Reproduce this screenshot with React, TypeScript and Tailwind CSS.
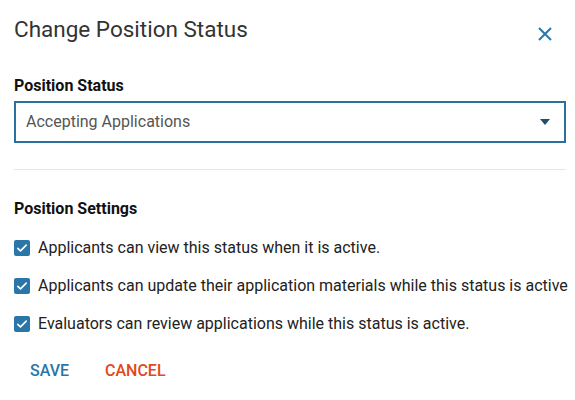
const settings = [
  "Applicants can view this status when it is active.",
  "Applicants can update their application materials while this status is active",
  "Evaluators can review applications while this status is active.",
];

function CheckBox() {
  return (
    <span className="flex h-4 w-4 shrink-0 items-center justify-center rounded-[2px] bg-[#2a76a8]">
      <svg viewBox="0 0 16 16" className="h-4 w-4" fill="none">
        <path d="M3.8 8.3l2.7 2.6 5.7-5.8" stroke="white" strokeWidth="1.6" strokeLinecap="round" strokeLinejoin="round" />
      </svg>
    </span>
  );
}

export default function App() {
  return (
    <div className="h-[400px] w-[575px] overflow-hidden bg-white font-['Roboto',sans-serif]">
      <div className="flex items-start justify-between pl-[14px] pr-[23px] pt-[14px]">
        <h1 className="text-[22.5px] leading-[30px] text-[#333]">Change Position Status</h1>
        <button className="mt-[13px] text-[#2a76a8]">
          <svg viewBox="0 0 14 14" className="h-[14px] w-[14px]" fill="none">
            <path d="M1 1l12 12M13 1L1 13" stroke="currentColor" strokeWidth="2" />
          </svg>
        </button>
      </div>

      <div className="pl-[14px] pr-[9px] pt-[32px]">
        <label className="block text-[16px] font-bold leading-[20px] text-[#111]">Position Status</label>
        <div className="mt-[5px] flex h-[42px] items-center justify-between border-2 border-[#2a71a0] pl-[10px] pr-[14px]">
          <span className="text-[16px] text-[#555]">Accepting Applications</span>
          <svg viewBox="0 0 10 6" className="h-[6px] w-[10px]">
            <path d="M0 0h10L5 6z" fill="#1f4e70" />
          </svg>
        </div>

        <div className="mt-[26px] border-t border-[#e6e6e6]" />

        <h2 className="mt-[29px] text-[16px] font-bold leading-[20px] text-[#111]">Position Settings</h2>

        <div className="mt-[21px] flex flex-col gap-[22px]">
          {settings.map((s) => (
            <label key={s} className="flex h-4 items-center gap-[8px] whitespace-nowrap text-[16px] text-[#222]">
              <CheckBox />
              <span>{s}</span>
            </label>
          ))}
        </div>

        <div className="mt-[27px] flex gap-[36px] pl-[16px]">
          <button className="text-[16px] font-medium text-[#2a76a8]">SAVE</button>
          <button className="text-[16px] font-medium text-[#e2481c]">CANCEL</button>
        </div>
      </div>
    </div>
  );
}
